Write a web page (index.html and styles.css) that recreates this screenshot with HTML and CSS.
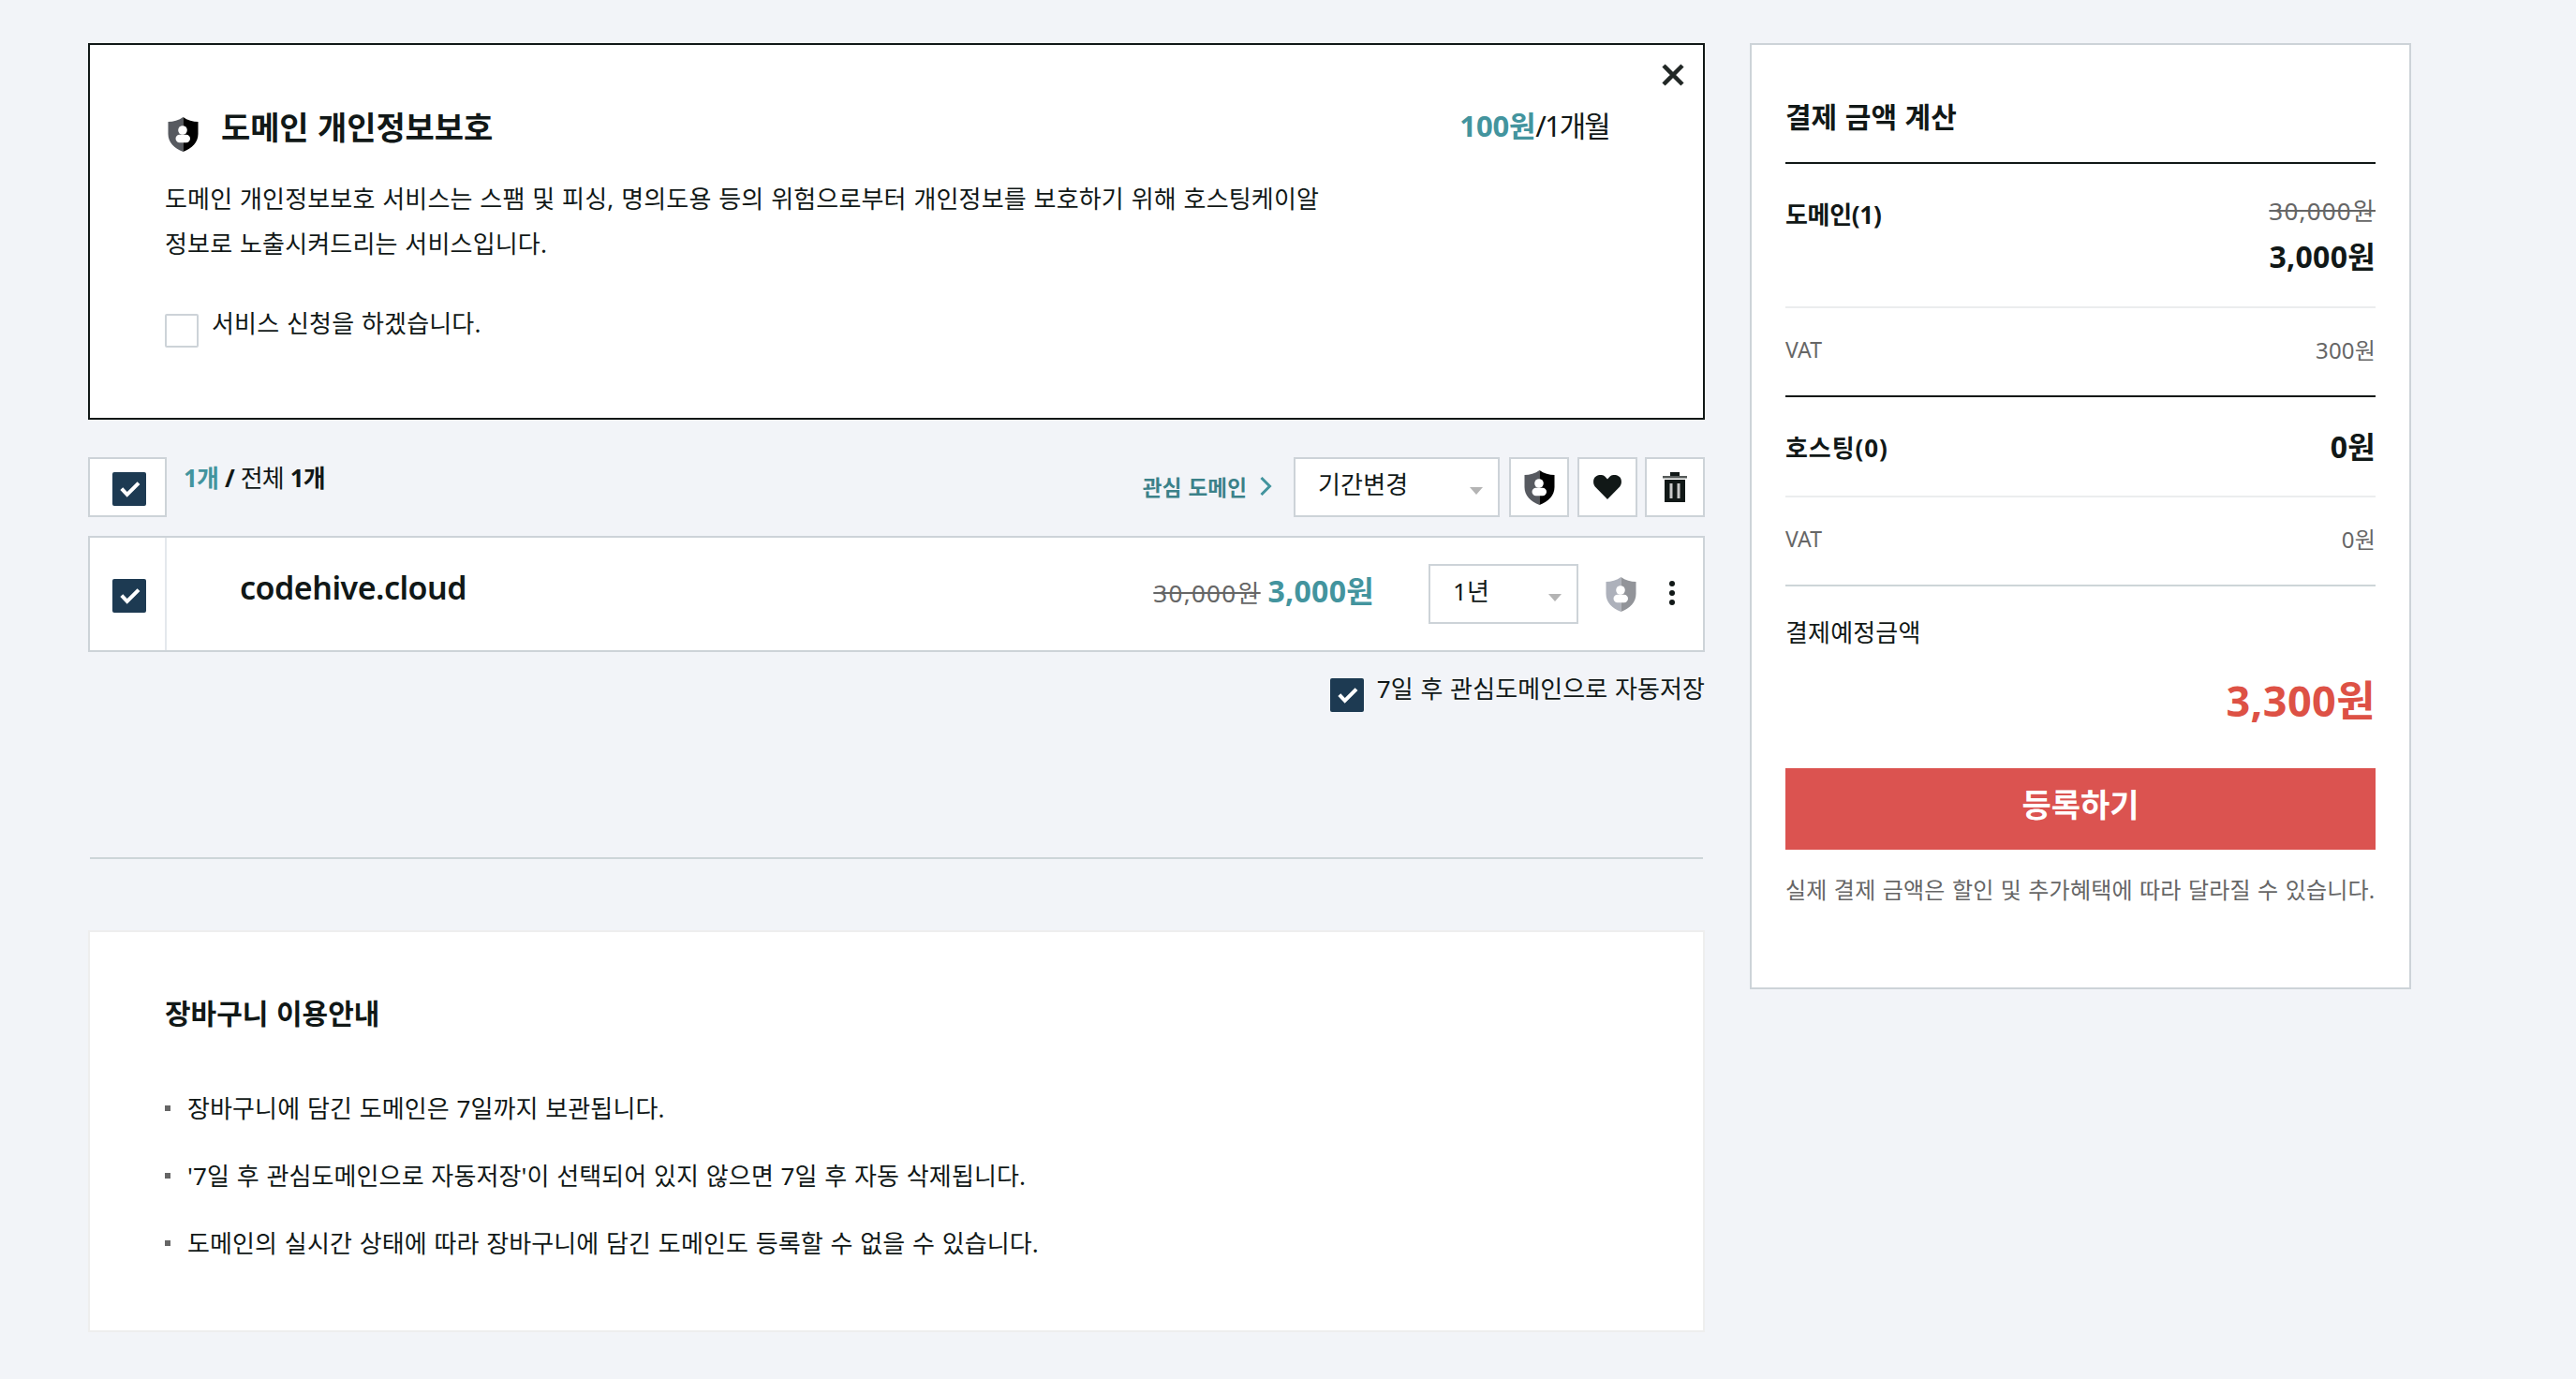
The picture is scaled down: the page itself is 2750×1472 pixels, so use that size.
FILE: index.html
```html
<!DOCTYPE html>
<html lang="ko">
<head>
    <meta charset="UTF-8">
    <meta name="viewport" content="width=device-width, initial-scale=1.0">
    <title>장바구니</title>
    <link rel="stylesheet" href="styles.css">
</head>
<body>
    <!-- shared icons -->
    <svg class="sprite" width="0" height="0">
        <symbol id="icon-check" viewBox="0 0 36 36">
            <path d="M9.8 17.6l5.9 6.3L28 11.6" fill="none" stroke="#fff" stroke-width="4"/>
        </symbol>
        <symbol id="icon-shield" viewBox="0 0 33 37">
            <path class="shield-left" d="M16.5 0C12 3.6 6 5 .5 5v13c0 9 6.5 15.5 16 19z"/>
            <path class="shield-right" d="M16.5 0C21 3.6 27 5 32.5 5v13c0 9-6.5 15.5-16 19z"/>
            <circle cx="16" cy="14" r="4.8" fill="#fff"/>
            <rect x="8.5" y="18.8" width="15.5" height="8.4" rx="4.2" fill="#fff"/>
        </symbol>
    </svg>

    <div class="container">
        <main class="cart">
            <section class="privacy">
                <button class="close" aria-label="닫기">
                    <svg width="24" height="24" viewBox="0 0 24 24"><path d="M2 2l20 20M22 2L2 22" stroke="#222826" stroke-width="4.5"/></svg>
                </button>
                <div class="privacy-head">
                    <svg class="shield privacy-shield" width="33" height="37"><use href="#icon-shield"/></svg>
                    <h2>도메인 개인정보보호</h2>
                    <p class="privacy-price"><strong>100원</strong>/1개월</p>
                </div>
                <p class="privacy-desc">도메인 개인정보보호 서비스는 스팸 및 피싱, 명의도용 등의 위험으로부터 개인정보를 보호하기 위해 호스팅케이알 정보로 노출시켜드리는 서비스입니다.</p>
                <label class="agree"><span class="checkbox"></span><span>서비스 신청을 하겠습니다.</span></label>
            </section>

            <div class="toolbar">
                <div class="check-all">
                    <span class="checkbox on"><svg width="36" height="36"><use href="#icon-check"/></svg></span>
                </div>
                <p class="count"><strong class="teal">1개</strong> <b>/</b> 전체 <strong>1개</strong></p>
                <a class="wish-link" href="#">관심 도메인
                    <svg width="13" height="20" viewBox="0 0 13 20"><path d="M1.5 1l9 9-9 9" fill="none" stroke="#43949e" stroke-width="3"/></svg>
                </a>
                <div class="select period">기간변경<i class="arrow"></i></div>
                <button class="tool"><svg class="shield" width="33" height="37"><use href="#icon-shield"/></svg></button>
                <button class="tool heart">
                    <svg width="30" height="26" viewBox="0 0 30 26"><path d="M15 26L1.8 12.5C-.5 9.5-.5 5 1.8 2.3 5-.8 10-.8 12.5 1.8L15 4.5l2.5-2.7C20-.8 25-.8 28.2 2.3c2.3 2.7 2.3 7.2 0 10.2z" fill="#111817"/></svg>
                </button>
                <button class="tool trash">
                    <svg width="26" height="32" viewBox="0 0 26 32">
                        <path d="M8 0h10v4H8z" fill="#111817"/>
                        <path d="M0 4h26v2.5H0z" fill="#555a59"/>
                        <path d="M2 8h22v24H2z" fill="#111817"/>
                        <path d="M7.5 12h3v16h-3zM15.5 12h3v16h-3z" fill="#c8c8c8"/>
                    </svg>
                </button>
            </div>

            <div class="item">
                <div class="item-check">
                    <span class="checkbox on"><svg width="36" height="36"><use href="#icon-check"/></svg></span>
                </div>
                <p class="item-name">codehive.cloud</p>
                <p class="item-price"><del>30,000원</del> <strong>3,000원</strong></p>
                <div class="select year">1년<i class="arrow"></i></div>
                <svg class="shield item-shield" width="33" height="37"><use href="#icon-shield"/></svg>
                <svg class="item-more" width="6" height="26" viewBox="0 0 6 26">
                    <circle cx="3" cy="3" r="3"/><circle cx="3" cy="13" r="3"/><circle cx="3" cy="23" r="3"/>
                </svg>
            </div>

            <label class="autosave">
                <span class="checkbox on"><svg width="36" height="36"><use href="#icon-check"/></svg></span>
                <span>7일 후 관심도메인으로 자동저장</span>
            </label>

            <hr class="divider">

            <section class="guide">
                <h3>장바구니 이용안내</h3>
                <ul>
                    <li>장바구니에 담긴 도메인은 7일까지 보관됩니다.</li>
                    <li>'7일 후 관심도메인으로 자동저장'이 선택되어 있지 않으면 7일 후 자동 삭제됩니다.</li>
                    <li>도메인의 실시간 상태에 따라 장바구니에 담긴 도메인도 등록할 수 없을 수 있습니다.</li>
                </ul>
            </section>
        </main>

        <aside class="summary">
            <h3>결제 금액 계산</h3>
            <div class="sum-row sum-domain">
                <strong>도메인(1)</strong>
                <div class="amounts"><del>30,000원</del><b>3,000원</b></div>
            </div>
            <div class="sum-row vat"><span>VAT</span><span class="vat-price">300원</span></div>
            <div class="sum-row sum-hosting">
                <strong>호스팅(0)</strong>
                <div class="amounts"><b>0원</b></div>
            </div>
            <div class="sum-row vat"><span>VAT</span><span class="vat-price">0원</span></div>
            <div class="total">
                <p>결제예정금액</p>
                <p class="total-price">3,300원</p>
            </div>
            <button class="submit">등록하기</button>
            <p class="note">실제 결제 금액은 할인 및 추가혜택에 따라 달라질 수 있습니다.</p>
        </aside>
    </div>
</body>
</html>
```
FILE: styles.css
```css
* {
    box-sizing: border-box;
    margin: 0;
    padding: 0;
}
body {
    background: #f2f4f8;
    color: #111817;
    font-family: "Noto Sans", "Noto Sans CJK KR", sans-serif;
    font-size: 26px;
    letter-spacing: 0.17px;
    word-spacing: 0.8px;
}
button {
    border: none;
    background: none;
    font-family: inherit;
}
svg {
    display: block;
    flex: none;
}
.sprite {
    position: absolute;
}
.container {
    display: flex;
    align-items: flex-start;
    gap: 48px;
    padding: 46px 0 0 94px;
}
.cart {
    width: 1726px;
}
.teal {
    color: #43949e;
}

/* checkbox */
.checkbox {
    flex: none;
    display: block;
    width: 36px;
    height: 36px;
    border: 2px solid #cdd3d8;
    border-radius: 2px;
    background: #fff;
}
.checkbox.on {
    border: none;
    background: #1d3a52;
}

/* shield */
.shield {
    --left: #575a60;
    --right: #000;
}
.shield-left {
    fill: var(--left);
}
.shield-right {
    fill: var(--right);
}

/* privacy box */
.privacy {
    position: relative;
    height: 402px;
    padding: 64px 100px 0 80px;
    border: 2px solid #111817;
    background: #fff;
}
.close {
    position: absolute;
    top: 20px;
    right: 20px;
}
.privacy-head {
    display: flex;
    height: 48px;
}
.privacy-shield {
    margin: 13px 24px 0 3px;
}
.privacy-head h2 {
    font-size: 34px;
    line-height: 48px;
    letter-spacing: -0.1px;
}
.privacy-price {
    margin-left: auto;
    font-size: 31px;
    line-height: 45px;
    letter-spacing: -1.9px;
}
.privacy-price strong {
    color: #43949e;
    letter-spacing: -0.2px;
}
.privacy-desc {
    width: 1250px;
    margin-top: 28px;
    line-height: 48px;
}
.agree {
    display: flex;
    gap: 14px;
    margin-top: 51px;
    line-height: 21px;
}

/* toolbar */
.toolbar {
    display: flex;
    height: 64px;
    margin-top: 40px;
}
.check-all {
    width: 84px;
    padding: 14px 0 0 24px;
    border: 2px solid #cdd3d8;
    background: #fff;
}
.count {
    margin-left: 18px;
    line-height: 45px;
    letter-spacing: -0.8px;
}
.wish-link {
    display: flex;
    gap: 14px;
    align-items: center;
    height: 62px;
    margin-left: auto;
    color: #3b8189;
    font-size: 22.5px;
    font-weight: bold;
    text-decoration: none;
}
.select {
    display: flex;
    justify-content: space-between;
    height: 64px;
    padding: 0 16px 0 24px;
    border: 2px solid #cdd3d8;
    background: #fff;
    line-height: 55px;
}
.arrow {
    margin-top: 30px;
    width: 14px;
    height: 8px;
    background: #b4b4b4;
    clip-path: polygon(0 0, 100% 0, 50% 100%);
}
.period {
    width: 220px;
    margin-left: 23px;
}
.tool {
    display: flex;
    justify-content: center;
    width: 64px;
    height: 64px;
    margin-left: 10px;
    padding-top: 12px;
    border: 2px solid #cdd3d8;
    background: #fff;
}
.heart {
    margin-left: 9px;
    padding-top: 17px;
}
.trash {
    margin-left: 8px;
    padding-top: 14px;
}

/* cart item */
.item {
    display: flex;
    height: 124px;
    margin-top: 20px;
    border: 2px solid #cdd3d8;
    background: #fff;
}
.item-check {
    width: 82px;
    padding: 44px 0 0 24px;
    border-right: 2px solid #e4e8ec;
}
.item-name {
    margin-left: 78px;
    font-size: 34px;
    font-weight: 600;
    line-height: 107px;
    letter-spacing: -0.5px;
}
.item-price {
    margin-left: auto;
    font-size: 26px;
    line-height: 114px;
}
.item-price del {
    color: #666;
    letter-spacing: 1.3px;
}
.item-price strong {
    color: #43949e;
    font-size: 32px;
    letter-spacing: 0.3px;
}
.year {
    width: 160px;
    margin: 28px 0 0 58px;
}
.item-shield {
    --left: #adb1bb;
    --right: #929499;
    margin: 42px 0 0 29px;
}
.item-more {
    margin: 46px 30px 0 35px;
    fill: #111817;
}

.autosave {
    display: flex;
    justify-content: flex-end;
    gap: 14px;
    margin-top: 28px;
    line-height: 22px;
    letter-spacing: 0.1px;
}
.divider {
    height: 2px;
    margin: 155px 2px 76px;
    border: none;
    background: #cdd5d8;
}

/* guide */
.guide {
    height: 429px;
    padding: 65px 80px 0;
    border: 2px solid #eee;
    background: #fff;
}
.guide h3 {
    font-size: 30px;
    line-height: 44px;
    letter-spacing: 0;
}
.guide ul {
    margin-top: 43px;
    list-style: none;
}
.guide li {
    display: flex;
    align-items: center;
    gap: 18px;
    line-height: 72px;
    letter-spacing: 0.12px;
}
.guide li::before {
    content: "";
    width: 6px;
    height: 6px;
    background: #666;
}

/* payment summary */
.summary {
    width: 706px;
    height: 1010px;
    padding: 0 36px;
    border: 2px solid #cdd3d8;
    background: #fff;
}
.summary h3 {
    height: 127px;
    padding-top: 55px;
    border-bottom: 2px solid #111817;
    font-size: 30px;
    line-height: 44px;
    letter-spacing: 0;
}
.sum-row {
    display: flex;
    justify-content: space-between;
}
.sum-row strong {
    letter-spacing: -0.3px;
}
.amounts {
    display: flex;
    flex-direction: column;
    align-items: flex-end;
    line-height: 48px;
}
.amounts del {
    color: #666;
    letter-spacing: 1.2px;
}
.amounts b {
    font-size: 32px;
    line-height: 50px;
    letter-spacing: 0.3px;
}
.sum-domain {
    height: 154px;
    padding-top: 26px;
    border-bottom: 2px solid #ebedee;
    line-height: 57px;
}
.sum-hosting {
    height: 107px;
    padding-top: 28px;
    border-bottom: 2px solid #ebedee;
    line-height: 53px;
}
.sum-hosting strong {
    letter-spacing: 0.9px;
}
.vat {
    height: 95px;
    border-bottom: 2px solid #111817;
    color: #666;
    font-size: 23px;
    line-height: 89px;
}
.vat-price {
    font-size: 24px;
}
.sum-hosting + .vat {
    border-color: #cdd5d8;
}
.total {
    height: 194px;
    padding-top: 24px;
    line-height: 50px;
}
.total-price {
    margin-top: 18px;
    color: #dd5145;
    font-size: 45px;
    font-weight: bold;
    line-height: 60px;
    letter-spacing: 0.4px;
    text-align: right;
}
.submit {
    display: block;
    width: 100%;
    height: 87px;
    padding-bottom: 12px;
    background: #db5350;
    color: #fff;
    font-size: 34px;
    font-weight: bold;
}
.note {
    margin-top: 21px;
    color: #666;
    font-size: 24px;
    line-height: 44px;
    letter-spacing: 0.22px;
    white-space: nowrap;
}
```
